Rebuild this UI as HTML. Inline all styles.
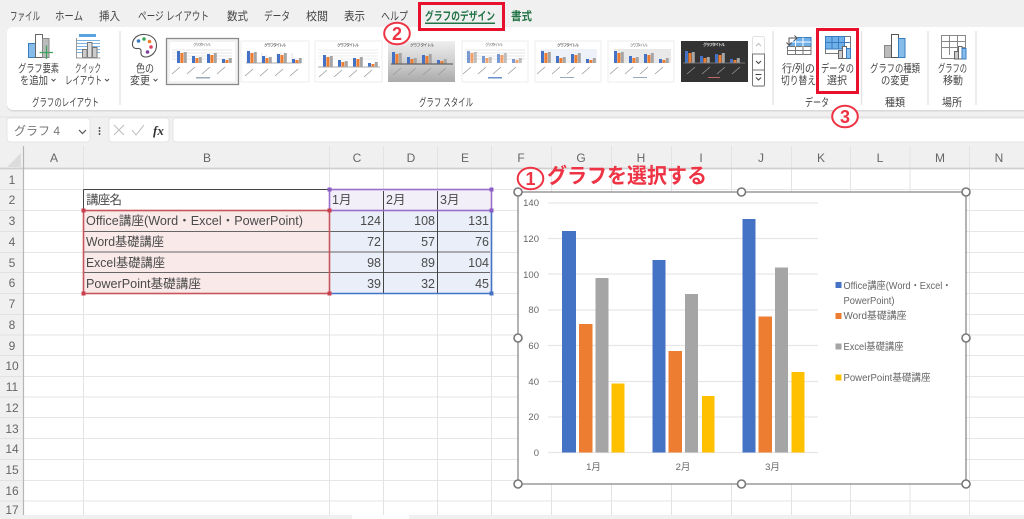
<!DOCTYPE html>
<html lang="ja"><head><meta charset="utf-8"><title>Excel</title>
<style>
html,body{margin:0;padding:0;background:#f0f0f0;width:1024px;height:519px;overflow:hidden}
svg{display:block;filter:blur(.3px)}
text{font-family:"Liberation Sans","Noto Sans CJK JP",sans-serif}
.r{font-size:11px;fill:#444}
.tab{font-size:11.5px;fill:#444}
.h{font-size:12px;fill:#666}
.c{font-size:12.5px;fill:#4a4a4a}
.a{font-size:9.5px;fill:#666}
.l{font-size:10px;fill:#666}
.red{fill:#ee3344;font-weight:700}
.tt{font-size:4px;fill:#777}
</style></head><body>
<svg width="1024" height="519" viewBox="0 0 1024 519" xmlns="http://www.w3.org/2000/svg">
<defs>
<symbol id="g" width="60" height="14" viewBox="0 0 60 14" overflow="visible">
<path d="M0 2h3v12H0zM15 7h3v7h-3zM30 5h3v9h-3zM45 10h3v4h-3z" fill="#4472c4"/>
<path d="M3.4 4h3v10h-3zM18.4 9h3v5h-3zM33.4 6h3v8h-3zM48.4 11h3v3h-3z" fill="#ed7d31"/>
<path d="M6.8 3h3v11h-3zM21.8 8h3v6h-3zM36.8 4h3v10h-3zM51.8 9h3v5h-3z" fill="#a5a5a5"/>
</symbol>
<symbol id="d" width="60" height="8" viewBox="0 0 60 8" overflow="visible">
<path d="M0 8L8 1M15 8L23 1M30 8L38 1M45 8L53 1" stroke="#999" stroke-width=".8" fill="none"/>
</symbol>
</defs>
<rect width="1024" height="519" fill="#f0f0f0"/>

<!-- tabs -->
<text class="tab" x="10" y="20" textLength="30" lengthAdjust="spacingAndGlyphs">ファイル</text>
<text class="tab" x="55" y="20" textLength="28" lengthAdjust="spacingAndGlyphs">ホーム</text>
<text class="tab" x="99" y="20" textLength="21" lengthAdjust="spacingAndGlyphs">挿入</text>
<text class="tab" x="138" y="20" textLength="71" lengthAdjust="spacingAndGlyphs">ページ レイアウト</text>
<text class="tab" x="227" y="20" textLength="21" lengthAdjust="spacingAndGlyphs">数式</text>
<text class="tab" x="264" y="20" textLength="26" lengthAdjust="spacingAndGlyphs">データ</text>
<text class="tab" x="306" y="20" textLength="22" lengthAdjust="spacingAndGlyphs">校閲</text>
<text class="tab" x="344" y="20" textLength="21" lengthAdjust="spacingAndGlyphs">表示</text>
<text class="tab" x="381" y="20" textLength="27" lengthAdjust="spacingAndGlyphs">ヘルプ</text>
<text x="425" y="20" font-size="11.5" font-weight="700" fill="#217346" textLength="70" lengthAdjust="spacingAndGlyphs">グラフのデザイン</text>
<rect x="425" y="22.5" width="70" height="1.5" fill="#217346"/>
<text x="511" y="20" font-size="11.5" fill="#217346" font-weight="700" textLength="21" lengthAdjust="spacingAndGlyphs">書式</text>

<!-- ribbon panel -->
<rect x="7" y="28.5" width="1030" height="83" rx="6" fill="#d9d9d9"/>
<rect x="7" y="27" width="1030" height="83" rx="6" fill="#fff"/>
<rect x="0" y="116.5" width="1024" height="1" fill="#e2e2e2"/>
<path d="M120 31v74M773 31v74M861.5 31v74M928 31v74M976 31v74" stroke="#e3e3e3" stroke-width="1.3"/>

<!-- icon: add element -->
<rect x="28.5" y="43.5" width="7" height="14" fill="#85bcea" stroke="#3a7cc0"/>
<rect x="35.5" y="34.5" width="7" height="23" fill="#fff" stroke="#666"/>
<rect x="42.5" y="38.5" width="6.5" height="19" fill="#bbb" stroke="#888"/>
<path d="M46.5 45.500v13.500M39.500 52.500h13.500" stroke="#3fa35c" stroke-width="1.300"/>
<!-- icon: quick layout -->
<rect x="79" y="34" width="17" height="3" fill="#5aa2e0"/>
<path d="M76 40.500h24M76 43.500h24M76 46.500h24M76 49.500h24M76 52.500h24" stroke="#7ab5e6" stroke-width="1"/>
<rect x="82.500" y="49.500" width="4.500" height="8" fill="#ccc" stroke="#777"/>
<rect x="87.500" y="42.500" width="4.500" height="15" fill="#ddd" stroke="#777"/>
<rect x="92.500" y="47.500" width="4.500" height="10" fill="#ccc" stroke="#777"/>
<path d="M76.500 38v20h24" stroke="#999" fill="none"/>
<!-- palette -->
<path d="M145 34.500c-7-.5-12 3.500-12.500 9-.5 4 2.500 5.500 5 5 2.500-.5 4 1 3.500 3.500-.5 3 1.500 5 4.500 5 6 0 11-5 11-11.500S151.500 35 145 34.500z" fill="#fff" stroke="#555" stroke-width="1.100"/>
<circle cx="138.500" cy="41" r="1.800" fill="#3a7cc0"/><circle cx="144" cy="39" r="1.800" fill="#3fa35c"/><circle cx="149.500" cy="41.500" r="1.800" fill="#ed7d31"/><circle cx="151" cy="47" r="1.800" fill="#e04060"/><circle cx="147.500" cy="52" r="1.800" fill="#7a3fa0"/>

<!-- ribbon labels -->
<text class="r" x="18" y="72" textLength="41" lengthAdjust="spacingAndGlyphs">グラフ要素</text>
<text class="r" x="20" y="84" textLength="28" lengthAdjust="spacingAndGlyphs">を追加</text>
<path d="M51.500 79l2 2 2-2M105 79l2 2 2-2M153.500 79l2 2 2-2" stroke="#555" fill="none"/>
<text class="r" x="75" y="72" textLength="26" lengthAdjust="spacingAndGlyphs">クイック</text>
<text class="r" x="65" y="84" textLength="37" lengthAdjust="spacingAndGlyphs">レイアウト</text>
<text class="r" x="136" y="72" textLength="18" lengthAdjust="spacingAndGlyphs">色の</text>
<text class="r" x="130" y="84" textLength="20" lengthAdjust="spacingAndGlyphs">変更</text>
<text class="r" x="32" y="106" textLength="67" lengthAdjust="spacingAndGlyphs">グラフのレイアウト</text>
<text class="r" x="419" y="106" textLength="54" lengthAdjust="spacingAndGlyphs">グラフ スタイル</text>
<text class="r" x="805" y="106" textLength="24" lengthAdjust="spacingAndGlyphs">データ</text>
<text class="r" x="885" y="106" textLength="20" lengthAdjust="spacingAndGlyphs">種類</text>
<text class="r" x="942" y="106" textLength="20" lengthAdjust="spacingAndGlyphs">場所</text>
<text class="r" x="782" y="72" textLength="33" lengthAdjust="spacingAndGlyphs">行/列の</text>
<text class="r" x="781" y="84" textLength="35" lengthAdjust="spacingAndGlyphs">切り替え</text>
<text class="r" x="821" y="72" textLength="33" lengthAdjust="spacingAndGlyphs">データの</text>
<text class="r" x="827" y="84" textLength="20" lengthAdjust="spacingAndGlyphs">選択</text>
<text class="r" x="870" y="72" textLength="50" lengthAdjust="spacingAndGlyphs">グラフの種類</text>
<text class="r" x="881" y="84" textLength="28" lengthAdjust="spacingAndGlyphs">の変更</text>
<text class="r" x="938" y="72" textLength="29" lengthAdjust="spacingAndGlyphs">グラフの</text>
<text class="r" x="943" y="84" textLength="20" lengthAdjust="spacingAndGlyphs">移動</text>

<!-- thumbnails -->
<rect x="166.500" y="38.500" width="72" height="46" fill="#f2f2f2" stroke="#8a8a8a" stroke-width="1.300"/>
<rect x="170" y="42" width="65" height="39" fill="#fff"/>
<path d="M172 50h60M172 53h60M172 56h60M172 59h60" stroke="#ddd" stroke-width=".7"/>
<use href="#g" x="177" y="49"/><use href="#d" x="172" y="66"/>
<text class="tt" x="193" y="46" textLength="18">グラフ タイトル</text>
<rect x="196" y="77" width="14" height="1.500" fill="#9ab"/>

<rect x="241" y="41" width="68" height="41" fill="#fff" stroke="#eee"/>
<path d="M246 63h55" stroke="#aaa"/><path d="M247 53v10M262 53v10M277 53v10M292 53v10M251 52v11M266 55v8M281 52v11M296 58v5" stroke="#ccc" stroke-width=".6"/>
<use href="#g" x="247" y="49"/><use href="#d" x="245" y="68"/>
<text class="tt" x="264" y="46.500" textLength="22" font-weight="700">グラフ タイトル</text>

<rect x="315" y="41" width="67" height="41" fill="#fff" stroke="#eee"/>
<path d="M318 50h60M318 53h60M318 56h60M318 59h60" stroke="#e6e6e6" stroke-width=".7"/>
<use href="#g" x="323" y="53"/><use href="#d" x="319" y="69"/><path d="M318 67h62" stroke="#aaa"/>
<text class="tt" x="337" y="46.500" textLength="22" font-weight="700">グラフ タイトル</text>

<defs><linearGradient id="gg" x1="0" y1="0" x2="0" y2="1"><stop offset="0" stop-color="#eee"/><stop offset=".6" stop-color="#c9c9c9"/><stop offset="1" stop-color="#aaa"/></linearGradient></defs>
<rect x="388" y="41" width="67" height="41" fill="url(#gg)"/>
<use href="#g" x="392" y="50"/><path d="M391 64h62" stroke="#666" stroke-width="1.200"/><use href="#d" x="393" y="67"/>
<text class="tt" x="410" y="46.500" textLength="24" font-weight="700" fill="#444">グラフ タイトル</text>

<rect x="462" y="41" width="66" height="41" fill="#fff" stroke="#eee"/>
<path d="M465 50h60M465 53h60M465 56h60M465 59h60" stroke="#ddd" stroke-width=".7"/>
<g opacity=".7"><use href="#g" x="467" y="49"/></g><use href="#d" x="463" y="66"/>
<text class="tt" x="485" y="46" textLength="18">グラフ タイトル</text>
<rect x="488" y="77" width="14" height="1.500" fill="#6a8fd0"/>

<rect x="535" y="41" width="66" height="41" fill="#fff" stroke="#eee"/>
<rect x="541" y="49" width="56" height="14" fill="#eef1f8"/>
<use href="#g" x="541" y="49"/><use href="#d" x="537" y="66"/>
<text class="tt" x="557" y="46.500" textLength="22" font-weight="700">グラフ タイトル</text>
<rect x="560" y="77" width="14" height="1" fill="#9ab"/>

<rect x="608" y="41" width="66" height="41" fill="#fff" stroke="#eee"/>
<rect x="614" y="49" width="57" height="14" fill="#e8e8e8"/>
<use href="#g" x="614" y="49"/><use href="#d" x="610" y="66"/>
<text class="tt" x="630" y="46.500" textLength="18">グラフ タイトル</text>
<rect x="633" y="77" width="14" height="1" fill="#9ab"/>

<rect x="681" y="41" width="67" height="41" fill="#333"/>
<use href="#g" x="685" y="49"/><path d="M683 63h62" stroke="#888" stroke-width=".7"/><use href="#d" x="687" y="66"/>
<text x="703" y="46" font-size="4" fill="#ddd" textLength="22" font-weight="700">グラフ タイトル</text>
<rect x="708" y="77" width="12" height="1" fill="#b66"/>

<!-- gallery scroller -->
<rect x="752.500" y="36.500" width="12" height="50" rx="2" fill="#fff" stroke="#e2e2e2"/>
<rect x="752.500" y="54" width="12" height="16" fill="#fff" stroke="#777"/>
<rect x="752.500" y="70" width="12" height="16" rx="1" fill="#fff" stroke="#777"/>
<path d="M756 46l2.500-2.500L761 46" stroke="#bbb" fill="none"/>
<path d="M756 61l2.500 2.500L761 61" stroke="#444" fill="none"/>
<path d="M755.500 74.500h6M756 77.500l2.500 2.500 2.500-2.500" stroke="#444" fill="none"/>

<!-- icon switch row/col -->
<path d="M787.500 47l10-9.500h13.500v9.500z" fill="#6fb0e8" stroke="#3a7cc0"/>
<rect x="787.500" y="46.500" width="23.500" height="8" fill="#fff" stroke="#777"/>
<path d="M795.500 38v16.500M803 37.500v17M787.500 42h23.500" stroke="#fff" fill="none"/>
<path d="M795.500 46.500v8M803 46.500v8M787.500 50.500h23.500" stroke="#777" fill="none"/>
<path d="M789 45v-7h8M794.500 35.500l2.500 2.500-2.500 2.500M786.500 42.500l2.500 2.500 2.500-2.500" stroke="#555" fill="none"/>
<!-- icon select data -->
<rect x="825.500" y="36.500" width="25" height="17" fill="#fff" stroke="#777"/>
<rect x="825.500" y="36.500" width="19" height="12.500" fill="#6fb0e8" stroke="#3a7cc0"/>
<path d="M825.500 42.500h19M832 36.500V49M838.500 36.500V49M844.500 42.500h6" stroke="#3a7cc0" fill="none"/>
<rect x="838.500" y="50.500" width="4" height="8" fill="#ccc" stroke="#666"/>
<rect x="842.500" y="46.500" width="4" height="12" fill="#fff" stroke="#666"/>
<rect x="846.500" y="48.500" width="4" height="10" fill="#85bcea" stroke="#3a7cc0"/>
<!-- icon change type -->
<rect x="884.500" y="45.500" width="7" height="12" fill="#bbb" stroke="#888"/>
<rect x="891.500" y="34.500" width="7" height="23" fill="#fff" stroke="#555"/>
<rect x="898.500" y="38.500" width="6.500" height="19" fill="#85bcea" stroke="#3a7cc0"/>
<!-- icon move -->
<path d="M941.500 35.500h24v17h-8v6h-16z" fill="#fff" stroke="#888"/>
<path d="M941 41.500h24M941 47.500h24M949.500 35v20M957.500 35v17" stroke="#888" fill="none"/>
<rect x="954.500" y="51.500" width="4" height="7.500" fill="#ccc" stroke="#666"/>
<rect x="958.500" y="46.500" width="3.500" height="12.500" fill="#fff" stroke="#666"/>
<rect x="962" y="48.500" width="4" height="10.500" fill="#85bcea" stroke="#3a7cc0"/>

<!-- formula bar -->
<rect x="7" y="118" width="83" height="24" rx="3" fill="#fff" stroke="#e4e4e4"/>
<text x="14" y="135" font-size="12" fill="#777" textLength="46" lengthAdjust="spacing">グラフ 4</text>
<path d="M79 130l3.500 3.500L86 130" stroke="#555" fill="none" stroke-width="1.200"/>
<path d="M99.500 127v2M99.500 130v2M99.500 133v2" stroke="#555" stroke-width="1.500"/>
<rect x="109" y="118" width="60" height="24" rx="3" fill="#fff" stroke="#e4e4e4"/>
<path d="M114 125l10 10M124 125l-10 10" stroke="#bbb"/>
<path d="M132 130l4 5 8-10" stroke="#bbb" fill="none"/>
<text x="153" y="135" font-size="13" font-style="italic" font-weight="700" fill="#333" style="font-family:'Liberation Serif',serif">fx</text>
<rect x="173" y="118" width="860" height="24" rx="3" fill="#fff" stroke="#e4e4e4"/>

<!-- sheet -->
<rect x="24" y="169" width="1000" height="346" fill="#fff"/>
<rect x="0" y="145" width="1024" height="24" fill="#f0f0f0"/>
<path d="M21 153v14H7z" fill="#dcdcdc"/>
<path d="M24 189.500H1024M24 210.500H1024M24 231.500H1024M24 252.500H1024M24 272.500H1024M24 293.500H1024M24 314.500H1024M24 335H1024M24 355.500H1024M24 376.500H1024M24 397H1024M24 417.500H1024M24 438.500H1024M24 459.500H1024M24 480.500H1024M24 501H1024" stroke="#e6e6e6" stroke-width="1.100"/>
<path d="M83.500 146V515M329.500 146V515M383.500 146V515M437.500 146V515M491.500 146V515M551.500 146V515M611.500 146V515M671.500 146V515M731.500 146V515M791.500 146V515M850.500 146V515M910 146V515M969.500 146V515" stroke="#e3e3e3" stroke-width="1"/>
<path d="M0 168.500H1024" stroke="#cfcfcf" stroke-width="1.800"/>
<path d="M23.500 146V515" stroke="#b5b5b5" stroke-width="1.200"/>
<path d="M0 189.500H23M0 210.500H23M0 231.500H23M0 252.500H23M0 272.500H23M0 293.500H23M0 314.500H23M0 335H23M0 355.500H23M0 376.500H23M0 397H23M0 417.500H23M0 438.500H23M0 459.500H23M0 480.500H23M0 501H23" stroke="#e2e2e2"/>

<!-- headers -->
<g text-anchor="middle">
<text class="h" x="54" y="162">A</text><text class="h" x="207" y="162">B</text><text class="h" x="357" y="162">C</text><text class="h" x="411" y="162">D</text><text class="h" x="465" y="162">E</text><text class="h" x="521" y="162">F</text><text class="h" x="581" y="162">G</text><text class="h" x="641" y="162">H</text><text class="h" x="701" y="162">I</text><text class="h" x="761" y="162">J</text><text class="h" x="821" y="162">K</text><text class="h" x="880" y="162">L</text><text class="h" x="940" y="162">M</text><text class="h" x="999" y="162">N</text>
<text class="h" x="12" y="184">1</text><text class="h" x="12" y="204">2</text><text class="h" x="12" y="225">3</text><text class="h" x="12" y="246">4</text><text class="h" x="12" y="267">5</text><text class="h" x="12" y="287">6</text><text class="h" x="12" y="308">7</text><text class="h" x="12" y="329">8</text><text class="h" x="12" y="350">9</text><text class="h" x="12" y="370">10</text><text class="h" x="12" y="391">11</text><text class="h" x="12" y="412">12</text><text class="h" x="12" y="433">13</text><text class="h" x="12" y="453">14</text><text class="h" x="12" y="474">15</text><text class="h" x="12" y="495">16</text><text class="h" x="12" y="514">17</text>
</g>

<!-- table -->
<rect x="84" y="211" width="245" height="82" fill="#f9e9e9"/>
<rect x="330" y="211" width="161" height="82" fill="#e9eef8"/>
<rect x="330" y="190" width="161" height="20" fill="#f2eff8"/>
<path d="M83.500 189.500H329.500M83.500 189.500V210" stroke="#444" stroke-width="1"/>
<path d="M84 231.500H490M84 252H490M84 272.500H490" stroke="#666" stroke-width="1"/>
<path d="M383.500 191V293M437.500 191V293" stroke="#444" stroke-width="1"/>
<path d="M330 293.500H492M491.500 210V293" stroke="#4472c4" stroke-width="1.600" fill="none"/>
<rect x="83.500" y="210.500" width="246" height="83" fill="none" stroke="#c8555c" stroke-width="1.600"/>
<rect x="329.500" y="189.500" width="162" height="21" fill="none" stroke="#9a6fcc" stroke-width="1.600"/>
<path d="M81.500 208.500h4v4h-4zM327.500 208.500h4v4h-4zM81.500 291.500h4v4h-4zM327.500 291.500h4v4h-4z" fill="#c8404c"/>
<path d="M327.500 187.500h4v4h-4zM489.500 187.500h4v4h-4zM489.500 208.500h4v4h-4z" fill="#8a5cc4"/>
<path d="M489.500 291.500h4v4h-4z" fill="#4472c4"/>

<text class="c" x="86" y="204" textLength="36" lengthAdjust="spacing">講座名</text>
<text class="c" x="332" y="204">1月</text><text class="c" x="386" y="204">2月</text><text class="c" x="440" y="204">3月</text>
<text class="c" x="86" y="225" textLength="217" lengthAdjust="spacingAndGlyphs">Office講座(Word・Excel・PowerPoint)</text>
<text class="c" x="86" y="246" textLength="78" lengthAdjust="spacingAndGlyphs">Word基礎講座</text>
<text class="c" x="86" y="267" textLength="79" lengthAdjust="spacingAndGlyphs">Excel基礎講座</text>
<text class="c" x="86" y="288" textLength="115" lengthAdjust="spacingAndGlyphs">PowerPoint基礎講座</text>
<g text-anchor="end">
<text class="c" x="381" y="225">124</text><text class="c" x="435" y="225">108</text><text class="c" x="489" y="225">131</text>
<text class="c" x="381" y="246">72</text><text class="c" x="435" y="246">57</text><text class="c" x="489" y="246">76</text>
<text class="c" x="381" y="267">98</text><text class="c" x="435" y="267">89</text><text class="c" x="489" y="267">104</text>
<text class="c" x="381" y="288">39</text><text class="c" x="435" y="288">32</text><text class="c" x="489" y="288">45</text>
</g>

<!-- chart -->
<rect x="518" y="192" width="448" height="292" fill="#fff" stroke="#808080" stroke-width="1.200"/>
<path d="M548 203H818M548 238.500H818M548 274H818M548 310H818M548 345.500H818M548 381.500H818M548 417H818M548 452.500H818" stroke="#e6e6e6" stroke-width="1.300"/>
<g text-anchor="end">
<text class="a" x="539" y="206">140</text><text class="a" x="539" y="242">120</text><text class="a" x="539" y="278">100</text><text class="a" x="539" y="313">80</text><text class="a" x="539" y="349">60</text><text class="a" x="539" y="385">40</text><text class="a" x="539" y="420">20</text><text class="a" x="539" y="456">0</text>
</g>
<rect x="562" y="231" width="14" height="221.500" fill="#4472c4"/>
<rect x="579" y="324" width="13.500" height="128.500" fill="#ed7d31"/>
<rect x="595.500" y="278" width="13" height="174.500" fill="#a5a5a5"/>
<rect x="611.500" y="383.500" width="13" height="69" fill="#ffc000"/>
<rect x="652.500" y="260" width="13" height="192.500" fill="#4472c4"/>
<rect x="668.500" y="351" width="13.500" height="101.500" fill="#ed7d31"/>
<rect x="685" y="294" width="13" height="158.500" fill="#a5a5a5"/>
<rect x="702" y="396" width="12.500" height="56.500" fill="#ffc000"/>
<rect x="742.500" y="219" width="13" height="233.500" fill="#4472c4"/>
<rect x="758.500" y="316.500" width="13.500" height="136" fill="#ed7d31"/>
<rect x="775" y="267.500" width="13" height="185" fill="#a5a5a5"/>
<rect x="791.500" y="372" width="13" height="80.500" fill="#ffc000"/>
<g text-anchor="middle"><text class="a" x="593.500" y="470">1月</text><text class="a" x="683" y="470">2月</text><text class="a" x="772.500" y="470">3月</text></g>
<rect x="835.500" y="282" width="6" height="6" fill="#4472c4"/>
<rect x="835.500" y="313" width="6" height="6" fill="#ed7d31"/>
<rect x="835.500" y="343.500" width="6" height="6" fill="#a5a5a5"/>
<rect x="835.500" y="374.500" width="6" height="6" fill="#ffc000"/>
<text class="l" x="843.500" y="289" textLength="108" lengthAdjust="spacingAndGlyphs">Office講座(Word・Excel・</text>
<text class="l" x="843.500" y="304" textLength="51" lengthAdjust="spacingAndGlyphs">PowerPoint)</text>
<text class="l" x="843.500" y="319" textLength="63" lengthAdjust="spacingAndGlyphs">Word基礎講座</text>
<text class="l" x="843.500" y="350" textLength="60" lengthAdjust="spacingAndGlyphs">Excel基礎講座</text>
<text class="l" x="843.500" y="381" textLength="87" lengthAdjust="spacingAndGlyphs">PowerPoint基礎講座</text>
<g fill="#fff" stroke="#777" stroke-width="1.600">
<circle cx="518" cy="192" r="4"/><circle cx="741.500" cy="192" r="4"/><circle cx="966" cy="192" r="4"/>
<circle cx="518" cy="338" r="4"/><circle cx="966" cy="338" r="4"/>
<circle cx="518" cy="484" r="4"/><circle cx="741.500" cy="484" r="4"/><circle cx="966" cy="484" r="4"/>
</g>

<!-- annotations -->
<ellipse cx="530.500" cy="178.500" rx="12.800" ry="10.800" fill="none" stroke="#ee3344" stroke-width="2"/>
<text class="red" x="530.500" y="185" font-size="18" text-anchor="middle">1</text>
<text class="red" x="547" y="183" font-size="21" textLength="160" lengthAdjust="spacingAndGlyphs">グラフを選択する</text>
<ellipse cx="397" cy="33.500" rx="12.800" ry="10.800" fill="#fff" stroke="#ee3344" stroke-width="2"/>
<text class="red" x="397" y="40" font-size="18" text-anchor="middle">2</text>
<ellipse cx="845" cy="116.500" rx="12.800" ry="10.800" fill="#fff" stroke="#ee3344" stroke-width="2"/>
<text class="red" x="845" y="123" font-size="18" text-anchor="middle">3</text>
<rect x="419.500" y="3.500" width="84" height="26" fill="none" stroke="#e8112d" stroke-width="3"/>
<rect x="817.500" y="29.500" width="40" height="63" fill="none" stroke="#e8112d" stroke-width="3"/>

<!-- bottom -->
<rect x="0" y="515" width="352" height="4" rx="1" fill="#f0f0f0"/>
<rect x="352" y="515" width="57" height="4" fill="#fff"/>
<rect x="409" y="515" width="615" height="4" rx="1" fill="#f0f0f0"/>
</svg>
</body></html>
